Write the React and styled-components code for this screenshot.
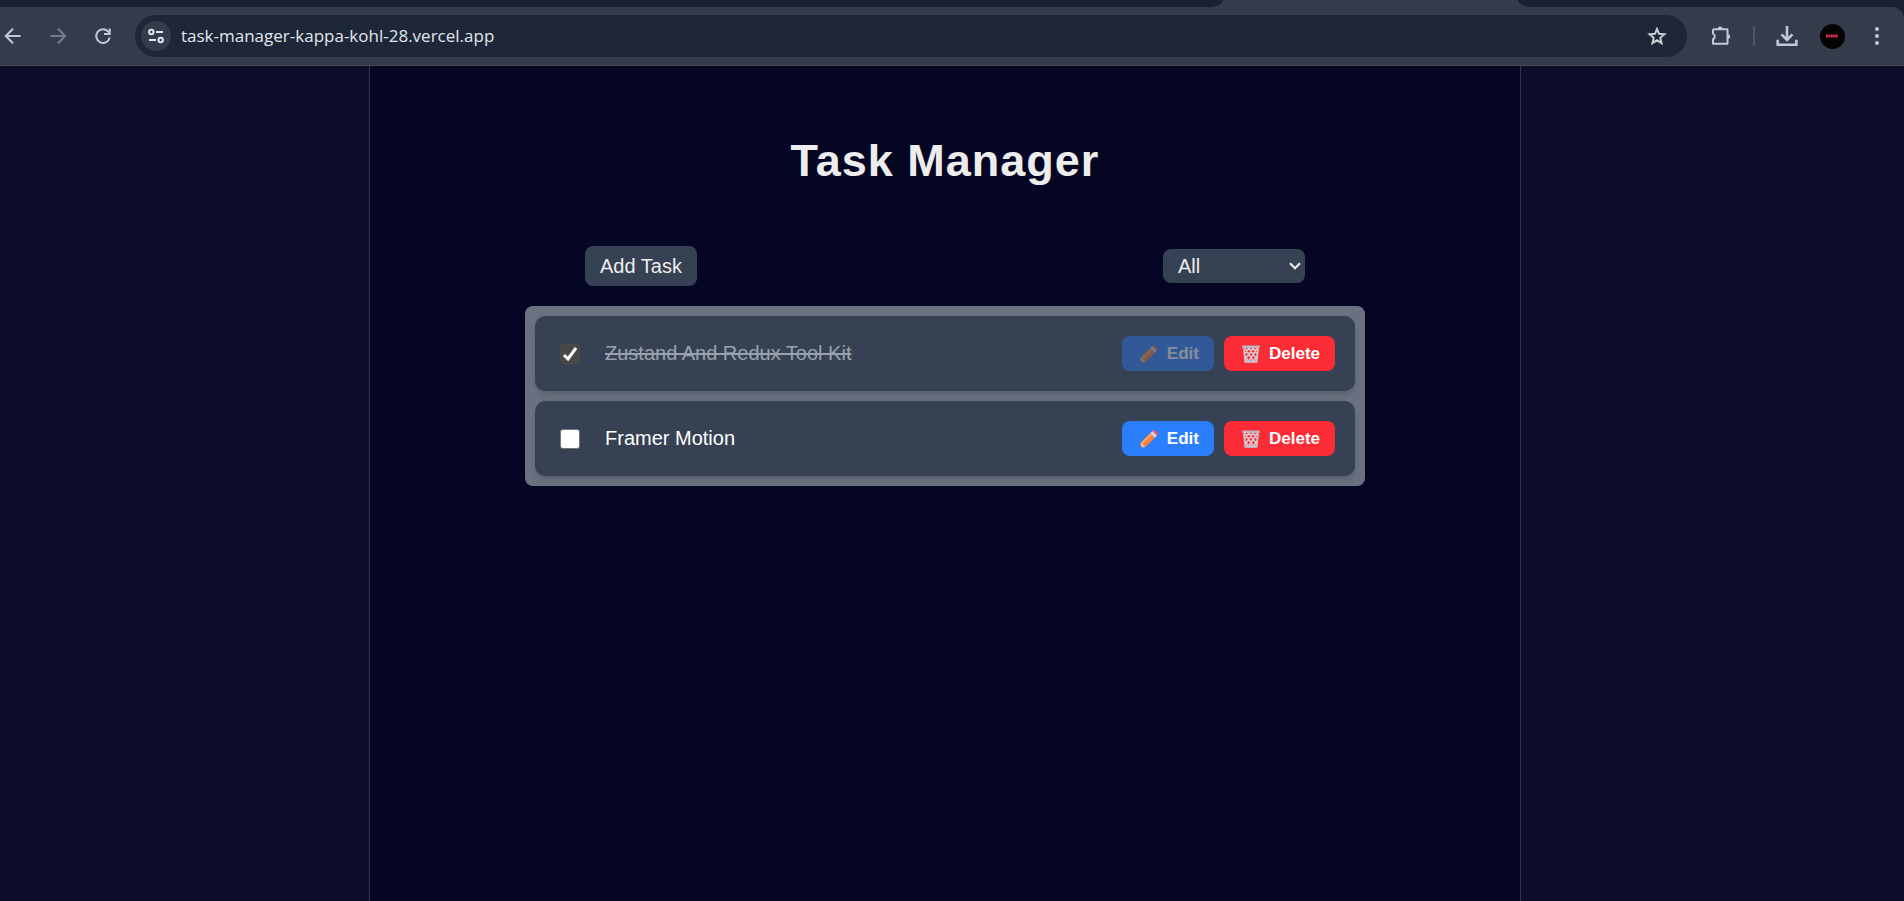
import React, { useState } from "react";
import styled, { createGlobalStyle } from "styled-components";

const GlobalStyle = createGlobalStyle`
  *, *::before, *::after { box-sizing: border-box; }
  body {
    margin: 0;
    background: #0d0e2b;
    color: #ededed;
    font-family: "Liberation Sans", Arial, Helvetica, sans-serif;
  }
  button, select, input { font: inherit; color: inherit; }
`;

const Page = styled.div`
  display: flex;
  flex-direction: column;
  min-height: 100vh;
`;

const BrowserBar = styled.header`
  background: #182131;
  border-bottom: 1px solid #474857;
`;

const TabStrip = styled.div`
  display: flex;
  height: 7px;
  background: #343c4c;
`;

const IdleTabs = styled.div`
  flex: ${({ $grow }) => $grow};
  background: #182131;
  border-radius: ${({ $side }) => ($side === "left" ? "0 0 14px 0 / 0 0 7px 0" : "0 0 0 14px / 0 0 0 7px")};
`;

const ActiveTab = styled.div`
  flex: 0 0 295px;
`;

const Toolbar = styled.div`
  display: flex;
  align-items: center;
  height: 58px;
  padding-right: 12px;
  background: #343c4c;
  border-top-right-radius: 12px;
`;

const NavButtons = styled.nav`
  display: flex;
  gap: 15px;
  width: 135px;
  flex: none;
  margin-left: -2px;
  margin-right: 2px;
`;

const IconButton = styled.button`
  display: grid;
  place-items: center;
  flex: none;
  width: 30px;
  height: 30px;
  padding: 0;
  border: 0;
  border-radius: 50%;
  background: ${({ $filled }) => ($filled ? "#343c4c" : "transparent")};
  color: ${({ $tone }) => $tone || "#bfc8dc"};
  svg { display: block; }
`;

const AddressBar = styled.div`
  display: flex;
  align-items: center;
  flex: 1;
  gap: 10px;
  height: 42px;
  padding: 0 15px 0 6px;
  border-radius: 21px;
  background: #1e2737;
`;

const AddressInput = styled.input`
  flex: 1;
  min-width: 0;
  padding: 0;
  border: 0;
  outline: 0;
  background: transparent;
  color: #e2e5ee;
  font-family: "Open Sans", "Noto Sans", sans-serif;
  font-size: 17px;
  line-height: 24px;
`;

const ToolbarActions = styled.div`
  display: flex;
  align-items: center;
  gap: 15px;
  padding-left: 19px;
`;

const Divider = styled.span`
  width: 2px;
  height: 20px;
  margin: 0 2px;
  background: #4b566b;
`;

const Avatar = styled.span`
  display: grid;
  place-items: center;
  width: 25px;
  height: 25px;
  border-radius: 50%;
  background: #050203;
`;

const Content = styled.div`
  display: flex;
  flex: 1;
  justify-content: center;
  padding-right: 14px;
`;

const Main = styled.main`
  width: 100%;
  max-width: 1152px;
  padding: 70px 20px;
  border: solid #33334d;
  border-width: 0 1px;
  background: #050624;
`;

const Title = styled.h1`
  margin: 0 0 60px;
  font-size: 45px;
  line-height: 50px;
  font-weight: 700;
  letter-spacing: 1px;
  text-align: center;
`;

const Controls = styled.div`
  display: flex;
  align-items: center;
  justify-content: space-between;
  max-width: 720px;
  margin: 0 auto 20px;
`;

const AddButton = styled.button`
  height: 40px;
  padding: 0 15px;
  border: 0;
  border-radius: 8px;
  background: #364153;
  font-size: 20px;
`;

const Filter = styled.select`
  appearance: none;
  width: 142px;
  height: 34px;
  padding: 0 24px 0 15px;
  border: 0;
  border-radius: 8px;
  background: #364153 url("data:image/svg+xml,%3Csvg xmlns='http://www.w3.org/2000/svg' viewBox='0 0 12 8'%3E%3Cpath d='M1 1.2l5 5 5-5' fill='none' stroke='%23ededed' stroke-width='2.2'/%3E%3C/svg%3E") right 4px center / 12px 8px no-repeat;
  font-size: 20px;
`;

const TaskList = styled.ul`
  display: flex;
  flex-direction: column;
  gap: 10px;
  max-width: 840px;
  margin: 0 auto;
  padding: 10px;
  border-radius: 8px;
  background: #6a7282;
  list-style: none;
`;

const TaskRow = styled.li`
  display: flex;
  align-items: center;
  justify-content: space-between;
  padding: 20px 20px 20px 25px;
  border-radius: 10px;
  background: #364153;
  box-shadow: 0 5px 8px -1px rgba(0, 0, 0, 0.1), 0 3px 5px -2px rgba(0, 0, 0, 0.1);
`;

const TaskLabel = styled.label`
  display: flex;
  align-items: center;
  gap: 25px;
  font-size: 20px;
  line-height: 35px;
  color: ${({ $done }) => ($done ? "#99a1af" : "#ffffff")};
`;

const TaskText = styled.span`
  text-decoration: ${({ $done }) => ($done ? "line-through" : "none")};
`;

const Checkbox = styled.input`
  appearance: none;
  width: 20px;
  height: 20px;
  margin: 0;
  border: 1px solid #767676;
  border-radius: 3px;
  background: #ffffff;
  &:checked {
    border-color: #484848;
    background: #484848 url("data:image/svg+xml,%3Csvg xmlns='http://www.w3.org/2000/svg' viewBox='0 0 18 18'%3E%3Cpath d='M3 10l4 4 8-11' fill='none' stroke='white' stroke-width='3'/%3E%3C/svg%3E") center / 18px no-repeat;
  }
`;

const RowActions = styled.div`
  display: flex;
  gap: 10px;
`;

const ActionButton = styled.button`
  display: flex;
  align-items: center;
  gap: 9px;
  height: 35px;
  padding: 0 15px 0 18px;
  border: 0;
  border-radius: 8px;
  background: ${({ $kind }) => ($kind === "edit" ? "#2b7fff" : "#fb2c36")};
  color: #ffffff;
  font-size: 17px;
  font-weight: 700;
  &:disabled { opacity: 0.4; }
`;

const Stroke = ({ size = 20, width = 2, children }) => (
  <svg width={size} height={size} viewBox="0 0 20 20" fill="none" stroke="currentColor" strokeWidth={width} aria-hidden="true">
    {children}
  </svg>
);

const PencilIcon = () => (
  <svg width="18" height="18" viewBox="0 0 18 18" aria-hidden="true">
    <path d="M0 17.8 1 12.4 5.6 17z" fill="#e8c7b0" />
    <path d="M0 17.8 .5 15.4 2.4 17.2z" fill="#5c4a56" />
    <path d="M1 12.4 10.3 3.2 14.8 7.7 5.6 17z" fill="#fb7a3c" />
    <path d="M1 12.4 10.3 3.2 12.3 5.2 3 14.4z" fill="#ffa04a" />
    <path d="M10.3 3.2 12.4 1.1 16.9 5.6 14.8 7.7z" fill="#dcd6e4" />
    <path d="M12.4 1.1 13 .5Q14 -.3 15 .5L17.4 2.9Q18.3 4 17.5 5L16.9 5.6z" fill="#f65a5e" />
  </svg>
);

const TrashIcon = () => (
  <svg width="18" height="18" viewBox="0 0 18 18" fill="none" aria-hidden="true">
    <path d="M2 3.5 3.3 16.5h11.4L16 3.5" stroke="#c9c3ce" strokeWidth="1.8" />
    <path d="M2.5 3 12 17M6.8 3l7.8 11M11 3l4.5 6M15.5 3 6 17M11.2 3 3.4 14M7 3 2.5 9M3 11l4 6M15 11l-4 6" stroke="#dacbd3" strokeWidth="1.5" />
    <path d="M.3 .5h17.4v2.6H.3z" fill="#bdb8c4" />
    <path d="M3 15.6h12v2H3z" fill="#c8c3ce" />
  </svg>
);

const initialTasks = [
  { id: 1, text: "Zustand And Redux Tool Kit", done: true },
  { id: 2, text: "Framer Motion", done: false },
];

function BrowserChrome() {
  return (
    <BrowserBar>
      <TabStrip>
        <IdleTabs $grow="1223 0 0" $side="left" />
        <ActiveTab />
        <IdleTabs $grow="386 0 0" $side="right" />
      </TabStrip>
      <Toolbar>
        <NavButtons aria-label="Browser navigation">
          <IconButton aria-label="Back">
            <Stroke><path d="M17.5 10H3.5M10 2.8 2.8 10l7.2 7.2" /></Stroke>
          </IconButton>
          <IconButton aria-label="Forward" $tone="#747c8d">
            <Stroke><path d="M2.5 10h14M10 2.8l7.2 7.2-7.2 7.2" /></Stroke>
          </IconButton>
          <IconButton aria-label="Reload">
            <Stroke><path d="M16.7 11.5A6.8 6.8 0 1 1 15 5.4L17 7.5M16.7 2.5V8h-5.7" /></Stroke>
          </IconButton>
        </NavButtons>
        <AddressBar>
          <IconButton aria-label="Site information" $filled $tone="#dfe4ef">
            <Stroke>
              <circle cx="5.3" cy="6" r="2.2" />
              <path d="M10 6h7M3 14h7" />
              <circle cx="14.7" cy="14" r="2.2" />
            </Stroke>
          </IconButton>
          <AddressInput aria-label="Address" defaultValue="task-manager-kappa-kohl-28.vercel.app" />
          <IconButton aria-label="Bookmark" $tone="#c9cbd3">
            <Stroke><path d="m10 3 2 4.7 5.4.5-4.1 3.6 1.2 5.3-4.5-2.8-4.5 2.8 1.2-5.3-4.1-3.6 5.4-.5z" /></Stroke>
          </IconButton>
        </AddressBar>
        <ToolbarActions>
          <IconButton aria-label="Extensions">
            <svg width="22" height="22" viewBox="0 0 22 22" aria-hidden="true">
              <path d="M3 4.2h14.5v5.3M17.500 13v5.700H3v-4.500a3 3 0 0 0 0-5.500V4.200M17.500 9v5" fill="none" stroke="currentColor" strokeWidth="2" strokeLinejoin="round" />
              <path d="M7.600 4a2.500 2.500 0 0 1 5 0zM17.700 9a2.500 2.500 0 0 1 0 5z" fill="currentColor" />
            </svg>
          </IconButton>
          <Divider />
          <IconButton aria-label="Downloads">
            <Stroke size={22} width={2.3}><path d="M10 1v12M5 8.500l5 5 5-5M1.500 13.500v4.500h17v-4.500" /></Stroke>
          </IconButton>
          <IconButton aria-label="Profile">
            <Avatar>
              <svg width="12" height="4" viewBox="0 0 12 4" aria-hidden="true">
                <path d="M0 2h12" stroke="#d8304a" strokeWidth="3" strokeDasharray="2 .4" />
              </svg>
            </Avatar>
          </IconButton>
          <IconButton aria-label="Menu">
            <svg width="20" height="20" viewBox="0 0 20 20" fill="currentColor" aria-hidden="true">
              <circle cx="10" cy="3" r="2" />
              <circle cx="10" cy="10" r="2" />
              <circle cx="10" cy="17" r="2" />
            </svg>
          </IconButton>
        </ToolbarActions>
      </Toolbar>
    </BrowserBar>
  );
}

export default function App() {
  const [tasks, setTasks] = useState(initialTasks);
  const [filter, setFilter] = useState("all");

  const toggle = (id) => setTasks(tasks.map((t) => (t.id === id ? { ...t, done: !t.done } : t)));
  const remove = (id) => setTasks(tasks.filter((t) => t.id !== id));
  const visible = tasks.filter((t) => filter === "all" || (filter === "completed") === t.done);

  return (
    <Page>
      <GlobalStyle />
      <BrowserChrome />
      <Content>
        <Main>
          <Title>Task Manager</Title>
          <Controls>
            <AddButton type="button">Add Task</AddButton>
            <Filter aria-label="Filter tasks" value={filter} onChange={(e) => setFilter(e.target.value)}>
              <option value="all">All</option>
              <option value="completed">Completed</option>
              <option value="pending">Pending</option>
            </Filter>
          </Controls>
          <TaskList>
            {visible.map((task) => (
              <TaskRow key={task.id}>
                <TaskLabel $done={task.done}>
                  <Checkbox type="checkbox" checked={task.done} onChange={() => toggle(task.id)} />
                  <TaskText $done={task.done}>{task.text}</TaskText>
                </TaskLabel>
                <RowActions>
                  <ActionButton type="button" $kind="edit" disabled={task.done}>
                    <PencilIcon />
                    Edit
                  </ActionButton>
                  <ActionButton type="button" $kind="delete" onClick={() => remove(task.id)}>
                    <TrashIcon />
                    Delete
                  </ActionButton>
                </RowActions>
              </TaskRow>
            ))}
          </TaskList>
        </Main>
      </Content>
    </Page>
  );
}
